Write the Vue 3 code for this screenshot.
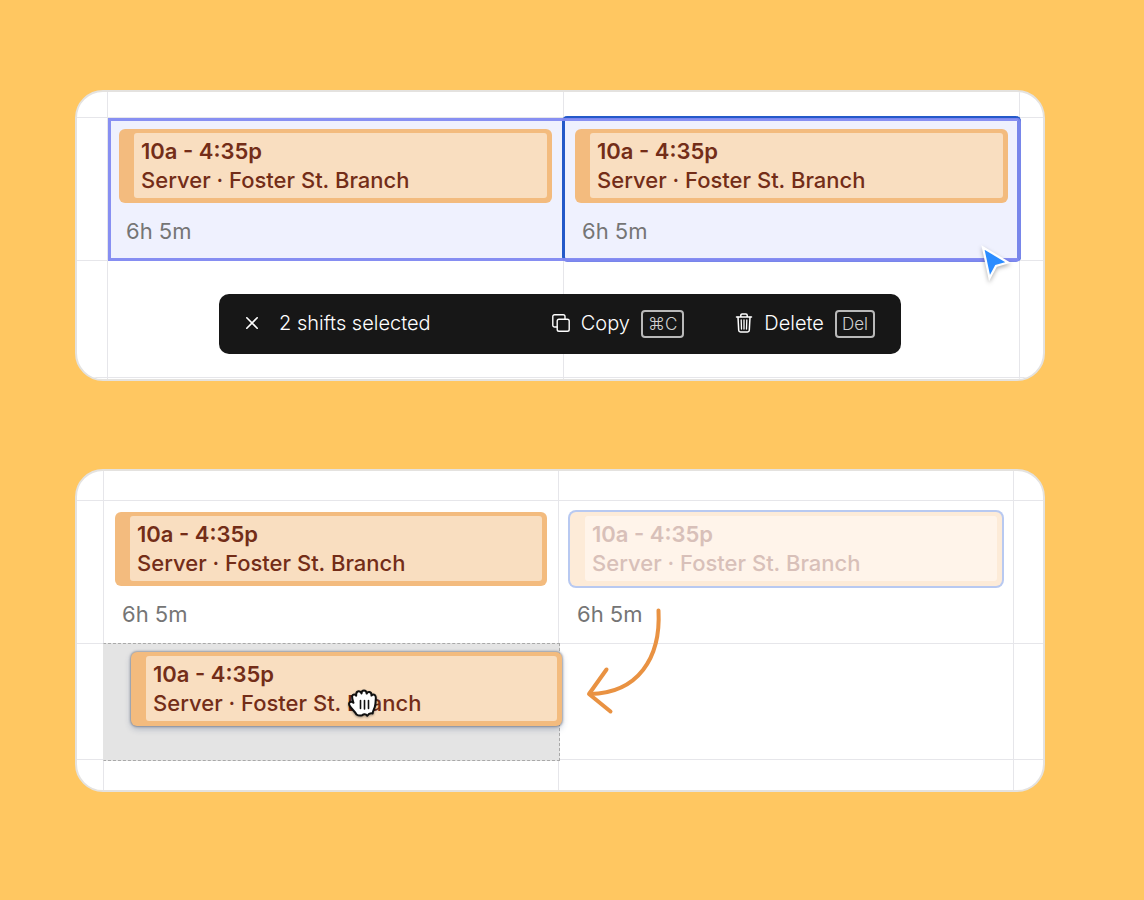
<template>
  <main class="page">
    <!-- Multi-select -->
    <section class="panel panelSelect" aria-label="Selected shifts">
      <div v-for="n in 16" :key="n" class="cell" :class="{ lastCol: n % 4 === 0, lastRow: n > 12 }"></div>

      <div v-for="(shift, i) in shifts" :key="shift.id" class="slot selected" :class="columns[i]">
        <article class="shift">
          <div class="shiftBody">
            <div class="shiftTime">{{ shift.time }}</div>
            <div class="shiftRole">{{ shift.role }}</div>
          </div>
        </article>
        <div class="duration">{{ shift.duration }}</div>
      </div>

      <div class="focusRing"></div>
      <div class="selectionRing"></div>

      <div class="toolbar" role="toolbar" aria-label="Shift actions">
        <button class="toolButton closeButton" type="button" aria-label="Clear selection">
          <svg width="12" height="12" viewBox="0 0 12 12" fill="none" stroke="currentColor" stroke-width="1.6" stroke-linecap="round">
            <path d="M.8.8l10.400 10.400M11.200.8L.8 11.200" />
          </svg>
        </button>
        <span class="toolCount">2 shifts selected</span>
        <button class="toolButton copyButton" type="button">
          <svg width="18" height="18" viewBox="0 0 18 18" fill="none" stroke="currentColor" stroke-width="1.4" stroke-linejoin="round" stroke-linecap="round">
            <rect x="5.2" y="5.2" width="12" height="12" rx="1.8" />
            <path d="M5 13H2.600A1.800 1.800 0 0 1 .8 11.200V2.600A1.800 1.800 0 0 1 2.600.8h8.600A1.800 1.800 0 0 1 13 2.600V5" />
          </svg>
          <span>Copy</span>
          <kbd>⌘C</kbd>
        </button>
        <button class="toolButton deleteButton" type="button">
          <svg width="18" height="20" viewBox="0 0 18 20" fill="none" stroke="currentColor" stroke-width="1.5" stroke-linejoin="round" stroke-linecap="round">
            <path d="M1.500 4h15M5.800 3.800V2.300A1.300 1.300 0 0 1 7.100 1h3.800a1.300 1.300 0 0 1 1.300 1.300v1.500" />
            <path d="M3 4.200l.7 13.100A1.800 1.800 0 0 0 5.500 19h7a1.800 1.800 0 0 0 1.800-1.700L15 4.200" />
            <path d="M6.200 7l.3 9M9 7V16M11.800 7l-.3 9" stroke-width="1.300" />
          </svg>
          <span>Delete</span>
          <kbd>Del</kbd>
        </button>
      </div>

      <svg class="pointer" width="36" height="40" viewBox="0 0 36 40">
        <path d="M5 4.500L30 19.500L18 23L11.500 35Z" fill="#2b8cff" stroke="#fff" stroke-width="2.200" stroke-linejoin="miter" />
      </svg>
    </section>

    <!-- Drag and drop -->
    <section class="panel panelDrag" aria-label="Moving a shift">
      <div v-for="n in 16" :key="n" class="cell" :class="{ lastCol: n % 4 === 0, lastRow: n > 12 }"></div>

      <div v-for="(shift, i) in shifts" :key="shift.id" class="slot" :class="columns[i]">
        <article class="shift" :class="{ ghost: i === 1 }">
          <div class="shiftBody">
            <div class="shiftTime">{{ shift.time }}</div>
            <div class="shiftRole">{{ shift.role }}</div>
          </div>
        </article>
        <div class="duration">{{ shift.duration }}</div>
      </div>

      <div class="dropZone">
        <article class="shift dragging">
          <div class="shiftBody">
            <div class="shiftTime">{{ shifts[1].time }}</div>
            <div class="shiftRole">{{ shifts[1].role }}</div>
          </div>
        </article>
        <svg class="hand" width="32" height="30" viewBox="0 0 32 30">
          <path
            d="M9.500 25.500C8 22.500 4 19.500 2.500 16.500C1.300 14 2.800 12.200 5.200 13L6.500 13.800C5.800 11.500 4.800 9 5.200 7C5.700 5 8.200 5 9.200 6.600C9 4 9.700 2.500 11.500 2.300C13 2.100 14 3 14.500 4.500C14.500 2.600 15.500 1.600 17 1.600C18.700 1.600 19.500 2.700 19.700 4.600C20.200 3.200 21.200 2.700 22.500 3C24.200 3.400 24.600 4.800 24.500 6.600C25.500 5.500 27 5.300 28 6.200C29.200 7.300 28.900 9 28.700 10.800C28.500 13.500 28.700 15 27.800 18C27.200 20 26 21.500 25.700 24.500C23.500 23.800 21.700 24.500 20.300 26.800C18.700 24.800 16.700 24.800 15.200 26.300C13.300 26.800 11.200 26.600 9.500 25.500Z"
            fill="#fff"
            stroke="#111"
            stroke-width="2"
            stroke-linejoin="round"
          />
          <path d="M13.500 11.500v8M17.500 11.500v8.500M21.500 11.500v8" stroke="#111" stroke-width="1.600" stroke-linecap="round" />
        </svg>
      </div>

      <svg class="arrow" width="80" height="110" viewBox="0 0 80 110" fill="none" stroke="#e99242" stroke-width="4" stroke-linecap="round" stroke-linejoin="round">
        <path d="M74.500 5.500C77 53 54 88 6 89" />
        <path d="M22.500 64.500L5 89L26.500 106.500" />
      </svg>
    </section>
  </main>
</template>

<script setup>
const columns = ["first", "second"];

const shifts = [
  { id: 1, time: "10a - 4:35p", role: "Server · Foster St. Branch", duration: "6h 5m" },
  { id: 2, time: "10a - 4:35p", role: "Server · Foster St. Branch", duration: "6h 5m" },
];
</script>

<style>
body {
  background: #ffc761;
}
</style>

<style scoped>
.page {
  box-sizing: border-box;
  min-height: 100vh;
  padding: 90px 99px 90px 75px;
  display: flex;
  flex-direction: column;
  gap: 88px;
  font-family: Inter, sans-serif;
}

.panel {
  position: relative;
  display: grid;
  overflow: hidden;
  border: 2px solid #e4e2df;
  border-radius: 28px;
  background: #fff;
}

.panelSelect {
  grid-template-columns: 31px 1fr 1fr 23px;
  grid-template-rows: 26px 143px 117px 1px;
}

.panelDrag {
  grid-template-columns: 27px 1fr 1fr 29px;
  grid-template-rows: 30px 143px 116px 30px;
}

/* Grid lines */
.cell {
  border-right: 1px solid #e6e6ea;
  border-bottom: 1px solid #e6e6ea;
}

.cell.lastCol { border-right: 0; }
.cell.lastRow { border-bottom: 0; }

.cell:nth-child(1) { grid-area: 1 / 1; }
.cell:nth-child(2) { grid-area: 1 / 2; }
.cell:nth-child(3) { grid-area: 1 / 3; }
.cell:nth-child(4) { grid-area: 1 / 4; }
.cell:nth-child(5) { grid-area: 2 / 1; }
.cell:nth-child(6) { grid-area: 2 / 2; }
.cell:nth-child(7) { grid-area: 2 / 3; }
.cell:nth-child(8) { grid-area: 2 / 4; }
.cell:nth-child(9) { grid-area: 3 / 1; }
.cell:nth-child(10) { grid-area: 3 / 2; }
.cell:nth-child(11) { grid-area: 3 / 3; }
.cell:nth-child(12) { grid-area: 3 / 4; }
.cell:nth-child(13) { grid-area: 4 / 1; }
.cell:nth-child(14) { grid-area: 4 / 2; }
.cell:nth-child(15) { grid-area: 4 / 3; }
.cell:nth-child(16) { grid-area: 4 / 4; }

.slot {
  grid-row: 2;
  padding: 11px 12px 0 11px;
}

.slot.first { grid-column: 2; }
.slot.second { grid-column: 3; }
.slot.selected { background: #eff1fe; }

/* Shift card */
.shift {
  padding: 4px 5px 5px 15px;
  border-radius: 6px;
  background: #f3bb7e;
  color: #732d18;
}

.shiftBody {
  padding: 4px 7px 3px;
  border-radius: 3px;
  background: #f9dec0;
  font-size: 22px;
  line-height: 29px;
  white-space: nowrap;
}

.shiftTime { font-weight: 600; }
.shiftRole { font-weight: 500; }

.duration {
  margin-top: 14px;
  padding-left: 7px;
  font-size: 22px;
  line-height: 29px;
  color: #757575;
}

.shift.ghost {
  background: #fdebd8;
  color: #d8c0b9;
  box-shadow: 0 0 0 2px #b8c9f1;
}

.shift.ghost .shiftBody { background: #fff4ea; }

.shift.dragging {
  box-shadow: 0 0 2px 1px rgba(70, 80, 100, .45), 0 3px 6px rgba(60, 80, 120, .3);
}

/* Selection outlines */
.focusRing {
  grid-area: 2 / 3;
  margin: -2px -1px -1px -2px;
  border: 3px solid #2459c9;
  border-bottom-color: #7886ea;
  border-radius: 5px;
}

.selectionRing {
  grid-area: 2 / 2 / 3 / 4;
  margin: 0 -1px 0 0;
  border: 3px solid rgba(129, 137, 242, .95);
  border-right: 4px solid #7886ea;
  border-radius: 0 4px 4px 0;
}

/* Floating toolbar */
.toolbar {
  position: absolute;
  left: 50%;
  bottom: 25px;
  transform: translateX(-50%);
  box-sizing: border-box;
  width: 682px;
  max-width: 100%;
  height: 60px;
  padding: 0 26px 2px;
  display: flex;
  align-items: center;
  border-radius: 10px;
  background: #171717;
  color: #fff;
  font-size: 20px;
  font-weight: 300;
  white-space: nowrap;
}

.toolButton {
  display: flex;
  align-items: center;
  padding: 0;
  border: 0;
  background: none;
  color: inherit;
  font: inherit;
  cursor: pointer;
}

.closeButton { padding: 1px; }
.toolCount { margin: 0 auto 0 20px; }
.copyButton { gap: 11px; }
.deleteButton { margin-left: 51px; gap: 11px; }

kbd {
  box-sizing: border-box;
  height: 28px;
  padding: 0 5px;
  margin-top: 2px;
  border: 2px solid #b9b9b9;
  border-radius: 4px;
  color: #d0d0d0;
  font-family: Inter, sans-serif;
  font-size: 17px;
  line-height: 24px;
}

.pointer {
  position: absolute;
  left: 901px;
  bottom: 96px;
  filter: drop-shadow(0 2px 2px rgba(0, 0, 0, .3));
}

/* Drop target */
.dropZone {
  position: relative;
  grid-area: 3 / 2;
  margin: -1px;
  padding: 8px 0 0 27px;
  border: 1px dashed #a9a9a9;
  border-left: 1px solid #e4e4e4;
  background: #e4e4e4;
}

.dropZone .shift { margin-right: -3px; }

.hand {
  position: absolute;
  left: 243px;
  top: 45px;
  filter: drop-shadow(0 1px 1px rgba(0, 0, 0, .35));
}

.arrow {
  position: absolute;
  left: 507px;
  top: 134px;
}
</style>
